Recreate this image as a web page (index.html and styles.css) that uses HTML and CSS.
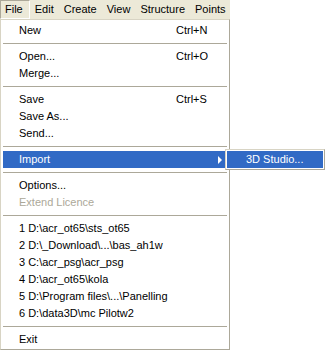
FILE: index.html
```html
<!DOCTYPE html>
<html lang="en">
<head>
    <meta charset="UTF-8">
    <title>File menu</title>
    <link rel="stylesheet" href="styles.css">
</head>
<body>

    <!-- Menu bar -->
    <div class="menubar">
        <span class="bar-item open">File</span>
        <span class="bar-item">Edit</span>
        <span class="bar-item">Create</span>
        <span class="bar-item">View</span>
        <span class="bar-item">Structure</span>
        <span class="bar-item">Points</span>
    </div>

    <!-- File dropdown -->
    <div class="menu">
        <div class="item"><span>New</span><span>Ctrl+N</span></div>
        <div class="sep"></div>
        <div class="item"><span>Open...</span><span>Ctrl+O</span></div>
        <div class="item"><span>Merge...</span></div>
        <div class="sep"></div>
        <div class="item"><span>Save</span><span>Ctrl+S</span></div>
        <div class="item"><span>Save As...</span></div>
        <div class="item"><span>Send...</span></div>
        <div class="sep"></div>
        <div class="item active">
            <span>Import</span><span class="arrow"></span>
            <div class="submenu">
                <div class="sub-item active">3D Studio...</div>
            </div>
        </div>
        <div class="sep"></div>
        <div class="item"><span>Options...</span></div>
        <div class="item disabled"><span>Extend Licence</span></div>
        <div class="sep"></div>
        <div class="item"><span>1 D:\acr_ot65\sts_ot65</span></div>
        <div class="item"><span>2 D:\_Download\...\bas_ah1w</span></div>
        <div class="item"><span>3 C:\acr_psg\acr_psg</span></div>
        <div class="item"><span>4 D:\acr_ot65\kola</span></div>
        <div class="item"><span>5 D:\Program files\...\Panelling</span></div>
        <div class="item"><span>6 D:\data3D\mc Pilotw2</span></div>
        <div class="sep"></div>
        <div class="item"><span>Exit</span></div>
    </div>

</body>
</html>
```

FILE: styles.css
```css
body {
    font-family: "Liberation Sans", Arial, sans-serif;
    font-size: 11px;
    background: #fff;
    color: #000;
    margin: 0;
}

.menubar {
    display: flex;
    width: 230px;
    height: 19px;
    background: #ece9d8;
}

.bar-item {
    padding: 0 5px;
    line-height: 19px;
    white-space: nowrap;
}

.bar-item.open {
    padding: 0 6px 0 4px;
    line-height: 17px;
    border-top: 1px solid #aca899;
    border-left: 1px solid #aca899;
    border-right: 1px solid #fff;
    border-bottom: 1px solid #fff;
}

/* Dropdown */
.menu {
    width: 224px;
    padding: 2px 2px 1px 2px;
    background: #fff;
    border: 1px solid #aca899;
    border-left-color: #d8d4c4;
    border-top-color: #d8d4c4;
}

.item {
    position: relative;
    display: grid;
    grid-template-columns: 157px 1fr;
    height: 17px;
    line-height: 17px;
    padding-left: 16px;
    white-space: nowrap;
}

.item.active {
    background: #316ac5;
    color: #fff;
}

.item.disabled {
    color: #aca899;
}

.arrow {
    justify-self: end;
    align-self: center;
    margin-right: 5px;
    width: 0;
    height: 0;
    border-top: 4px solid transparent;
    border-bottom: 4px solid transparent;
    border-left: 4px solid #fff;
}

.sep {
    height: 9px;
    display: flex;
    align-items: center;
}

.sep::after {
    content: "";
    flex: 1;
    height: 1px;
    background: #aca899;
}

/* Submenu over the right edge */
.submenu {
    position: absolute;
    top: -2px;
    left: 222px;
    width: 96px;
    padding: 1px;
    background: #fff;
    border: 1px solid #aca899;
    border-left-color: #d8d4c4;
    border-top-color: #d8d4c4;
}

.sub-item {
    height: 17px;
    line-height: 17px;
    padding-left: 19px;
}

.sub-item.active {
    background: #316ac5;
    color: #fff;
}
```
